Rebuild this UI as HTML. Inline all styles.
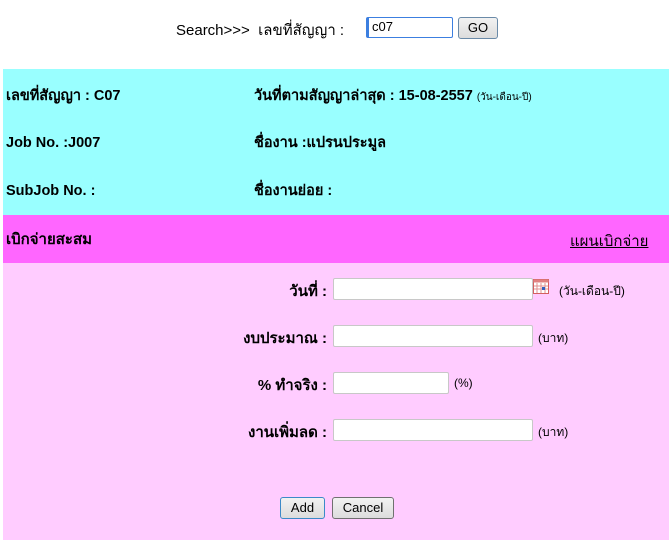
<!DOCTYPE html>
<html><head><meta charset="utf-8"><style>
body{margin:0;width:670px;height:540px;background:#fff;font-family:"Liberation Sans","DejaVu Sans",sans-serif;position:relative;overflow:hidden;color:#000}
.a{position:absolute;white-space:nowrap}
.b{font-weight:bold;font-size:14.5px;line-height:20px}
.inp{position:absolute;background:#fff;border:1px solid #c8c8c8;border-radius:2px;box-sizing:border-box}
.btn{position:absolute;box-sizing:border-box;border:1px solid #707070;border-radius:3px;background:linear-gradient(#f2f2f2,#dcdcdc);font-size:13px;text-align:center;line-height:19px}
.lbl{position:absolute;right:343px;font-size:15px;font-weight:bold;white-space:nowrap}
.u{font-size:12px;position:absolute;white-space:nowrap}
</style></head><body>
<div class="a" style="left:176px;top:18px;font-size:15px">Search&gt;&gt;&gt;&nbsp; เลขที่สัญญา :</div>
<div class="inp" style="left:366px;top:17px;width:87px;height:21px;border:1px solid #3c7fe0;font-size:13px;padding-left:3px;line-height:18px;border-left:3px solid #3c7fe0">c07</div>
<div class="btn" style="left:458px;top:17px;width:40px;height:22px;border-color:#6a8aa8">GO</div>
<div class="a" style="left:3px;top:69px;width:666px;height:146px;background:#99ffff"></div>
<div class="a b" style="left:6px;top:86px">เลขที่สัญญา : C07</div>
<div class="a b" style="left:254px;top:86px">วันที่ตามสัญญาล่าสุด : 15-08-2557 <span style="font-size:10px;font-weight:normal">(วัน-เดือน-ปี)</span></div>
<div class="a b" style="left:6px;top:133px">Job No. :J007</div>
<div class="a b" style="left:254px;top:133px">ชื่องาน :แปรนประมูล</div>
<div class="a b" style="left:6px;top:181px">SubJob No. :</div>
<div class="a b" style="left:254px;top:181px">ชื่องานย่อย :</div>
<div class="a" style="left:3px;top:215px;width:666px;height:48px;background:#ff66ff"></div>
<div class="a b" style="left:6px;top:230px;font-size:15px">เบิกจ่ายสะสม</div>
<div class="a" style="left:570px;top:229px;font-size:15px;text-decoration:underline">แผนเบิกจ่าย</div>
<div class="a" style="left:3px;top:263px;width:666px;height:277px;background:#ffccff"></div>
<div class="lbl" style="top:279px">วันที่ :</div>
<div class="inp" style="left:333px;top:278px;width:200px;height:22px"></div>
<svg class="a" style="left:533px;top:279px" width="16" height="15" viewBox="0 0 16 15"><rect x="0.5" y="0.5" width="15" height="14" fill="#fff" stroke="#d46060"/><rect x="0.5" y="0.5" width="15" height="3" fill="#e08080"/><path d="M4 4v10M8 4v10M12 4v10M1 7h14M1 10h14" stroke="#e09090"/><rect x="9" y="8" width="3" height="3" fill="#3060c0"/></svg>
<div class="u" style="left:559px;top:282px">(วัน-เดือน-ปี)</div>
<div class="lbl" style="top:326px">งบประมาณ :</div>
<div class="inp" style="left:333px;top:325px;width:200px;height:22px"></div>
<div class="u" style="left:538px;top:329px">(บาท)</div>
<div class="lbl" style="top:373px">% ทำจริง :</div>
<div class="inp" style="left:333px;top:372px;width:116px;height:22px"></div>
<div class="u" style="left:454px;top:376px">(%)</div>
<div class="lbl" style="top:420px">งานเพิ่มลด :</div>
<div class="inp" style="left:333px;top:419px;width:200px;height:22px"></div>
<div class="u" style="left:538px;top:423px">(บาท)</div>
<div class="btn" style="left:280px;top:497px;width:45px;height:22px;border-color:#3c8ac8">Add</div>
<div class="btn" style="left:332px;top:497px;width:62px;height:22px">Cancel</div>
</body></html>
